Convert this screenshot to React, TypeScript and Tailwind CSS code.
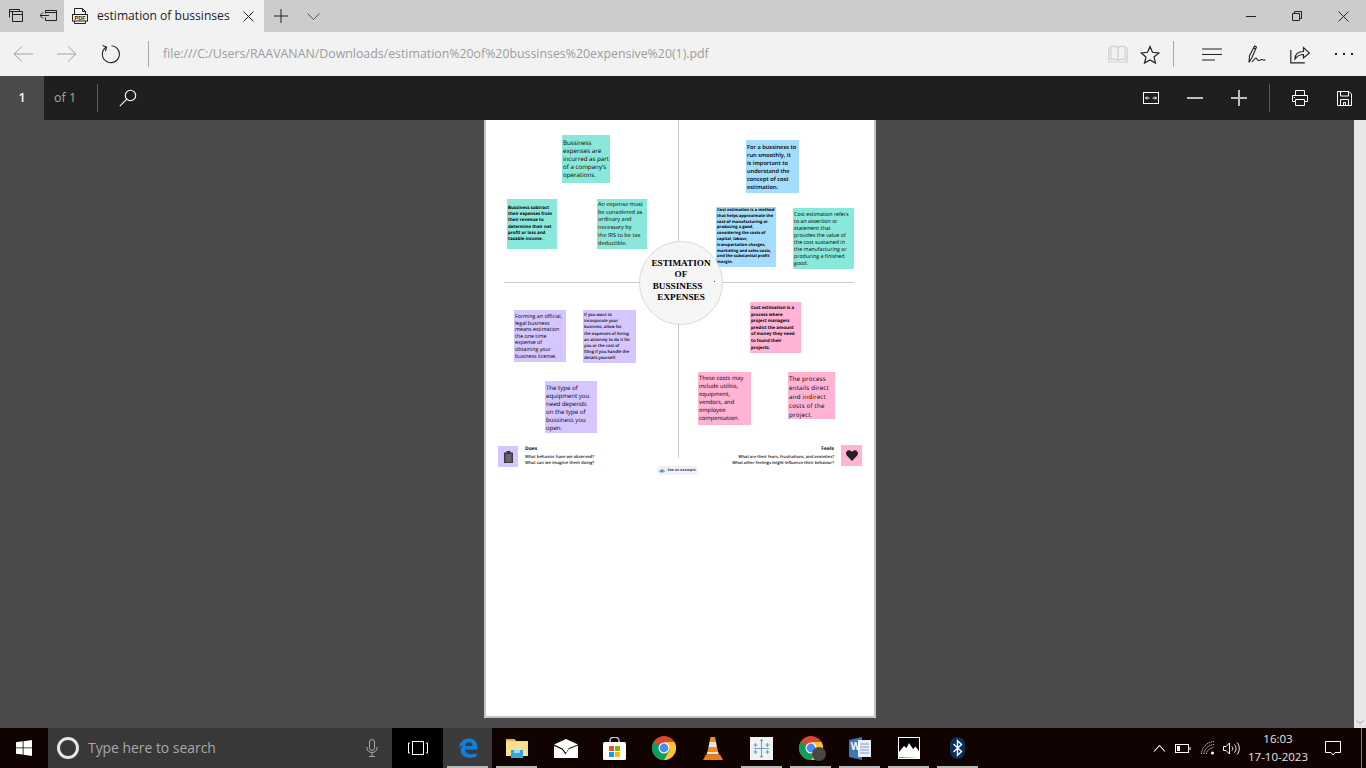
import type { ReactNode } from "react";

const sans = { fontFamily: '"Open Sans", "Noto Sans", sans-serif' };

type Note = {
  left: number;
  top: number;
  size: number;
  color: string;
  textClass: string;
  lines: string[];
};

// positions are relative to the pdf page, the sticky notes sit on a free canvas
const notes: Note[] = [
  { left: 78, top: 15, size: 48, color: "bg-[#8ae8da]", textClass: "text-[6.2px] leading-[8px] pt-[4px] pl-[1px]", lines: ["Bussiness", "expenses are", "incurred as part", "of a company's", "operations."] },
  { left: 23, top: 79, size: 50, color: "bg-[#8ae8da]", textClass: "text-[4.4px] leading-[6.2px] pt-[6px] pl-[1px] font-bold", lines: ["Bussiness subtract", "their expenses from", "their revenue to", "determine their net", "profit or loss and", "taxable income."] },
  { left: 113, top: 79, size: 50, color: "bg-[#8ae8da]", textClass: "text-[5.6px] leading-[7.7px] pt-[2px] pl-[1px]", lines: ["An expense must", "be considered as", "ordinary and", "necessary by", "the IRS to be tax", "deductible."] },
  { left: 262, top: 20, size: 53, color: "bg-[#a4dcfb]", textClass: "text-[5.7px] leading-[8px] pt-[3px] pl-[1px] font-semibold", lines: ["For a bussiness to", "run smoothly, it", "is important to", "understand the", "concept of cost", "estimation."] },
  { left: 232, top: 87, size: 60, color: "bg-[#a4dcfb]", textClass: "text-[4.1px] leading-[5.8px] pt-[1px] pl-[1px] font-bold", lines: ["Cost estimation is a method", "that helps approximate the", "cost of manufacturing or", "producing a good,", "considering the costs of", "capital, labour,", "transportation charges,", "marketing and sales costs,", "and the substantial profit", "margin."] },
  { left: 309, top: 88, size: 61, color: "bg-[#8ae8da]", textClass: "text-[5.3px] leading-[7px] pt-[3px] pl-[1px]", lines: ["Cost estimation refers", "to an assertion or", "statement that", "provides the value of", "the cost sustained in", "the manufacturing or", "producing a finished", "good."] },
  { left: 30, top: 190, size: 52, color: "bg-[#d6c6ff]", textClass: "text-[5.3px] leading-[6.6px] pt-[3px] pl-[1px]", lines: ["Forming an official,", "legal business", "means estimation", "the one time", "expense of", "obtaining your", "business license."] },
  { left: 99, top: 190, size: 53, color: "bg-[#d6c6ff]", textClass: "text-[4.2px] leading-[6.2px] pt-[3px] pl-[1px] font-semibold", lines: ["If you want to", "incorporate your", "business, allow for", "the expenses of hiring", "an attorney to do it for", "you or the cost of", "filing if you handle the", "details yourself."] },
  { left: 61, top: 261, size: 52, color: "bg-[#d6c6ff]", textClass: "text-[6.1px] leading-[8px] pt-[3px] pl-[1px]", lines: ["The type of", "equipment you", "need depends", "on the type of", "bussiness you", "open."] },
  { left: 266, top: 182, size: 51, color: "bg-[#ffb3d5]", textClass: "text-[4.4px] leading-[6.6px] pt-[3px] pl-[1px] font-bold", lines: ["Cost estimation is a", "process where", "project managers", "predict the amount", "of money they need", "to found their", "projects."] },
  { left: 214, top: 252, size: 53, color: "bg-[#ffb3d5]", textClass: "text-[5.8px] leading-[8px] pt-[2px] pl-[1px]", lines: ["These costs may", "include utilitis,", "equipment,", "vendors, and", "employee", "compensation."] },
  { left: 304, top: 252, size: 47, color: "bg-[#ffb3d5]", textClass: "text-[6.2px] leading-[9px] pt-[2px] pl-[1px] tracking-[0.2px]", lines: ["The process", "entails direct", "and indirect", "costs of the", "project."] },
];

function TabsIcon() {
  return (
    <svg width="16" height="16" viewBox="0 0 16 16" fill="none" stroke="#222">
      <path d="M1.5 9.5v-8h10v2M1.5 3.5h10" />
      <path d="M4.5 13.5v-10h10v10zM4.5 6.5h10" />
    </svg>
  );
}

function BackTabsIcon() {
  return (
    <svg width="17" height="12" viewBox="0 0 17 12" fill="none" stroke="#222">
      <path d="M5.5.5h11v10h-11v-3M5.500 3.5v-3M5.500 2.5h11" />
      <path d="M0 5.5h9M3 2.500l-3 3 3 3" />
    </svg>
  );
}

function PdfIcon() {
  return (
    <svg width="16" height="16" viewBox="0 0 16 16" fill="none" stroke="#222">
      <path d="M2.5 6V.5h8l3 3V6M2.5 13v2.5h11V13M10.5.5v3h3" />
      <rect x="0.5" y="6.5" width="15" height="6.5" />
      <text x="8" y="11.7" textAnchor="middle" fontSize="5.5" fontWeight="700" fill="#222" stroke="none" fontFamily="Liberation Sans">PDF</text>
    </svg>
  );
}

function CloseIcon({ size }: { size: number }) {
  return (
    <svg width={size} height={size} viewBox={`0 0 ${size} ${size}`} fill="none" stroke="#222">
      <path d={`M.5.5L${size - 0.5} ${size - 0.5}M${size - 0.5} .5L.5 ${size - 0.5}`} />
    </svg>
  );
}

function ArrowIcon({ back }: { back?: boolean }) {
  return (
    <svg width="20" height="16" viewBox="0 0 20 16" fill="none" stroke="#a3a3a3">
      <path d={back ? "M1 8h19M9 .5L1 8l8 7.5" : "M0 8h19M11 .5L19 8l-8 7.5"} />
    </svg>
  );
}

function RefreshIcon() {
  return (
    <svg width="20" height="20" viewBox="0 0 20 20" fill="none" stroke="#222" strokeWidth="1.1">
      <path d="M6 3.2A8.5 8.5 0 1 0 11.5 1.7" />
      <path d="M2.5 1.5L6.6 3 5.5 7" />
    </svg>
  );
}

function ReadingIcon() {
  return (
    <svg width="20" height="18" viewBox="0 0 20 18" fill="none" stroke="#cfcfcf" strokeWidth="1.2">
      <path d="M10 2.5C8 1 5 1 3 1.500v13c2-.5 5-.5 7 1 2-1.500 5-1.500 7-1v-13C15 1 12 1 10 2.500zM10 2.500v13" />
      <path d="M3 3H.8v14h18.4V3H17" />
    </svg>
  );
}

function StarIcon() {
  return (
    <svg width="20" height="19" viewBox="0 0 20 19" fill="none" stroke="#222" strokeWidth="1.2">
      <path d="M10 1.5l2.5 5.800 6.300.6-4.800 4.100 1.500 6.100L10 15l-5.500 3.100L6 12 1.200 7.900l6.300-.6z" />
    </svg>
  );
}

function HubIcon() {
  return (
    <svg width="20" height="13" viewBox="0 0 20 13" fill="none" stroke="#222">
      <path d="M0 1h20M0 6.500h20M0 12h13" />
    </svg>
  );
}

function PenIcon() {
  return (
    <svg width="18" height="19" viewBox="0 0 18 19" fill="none" stroke="#222" strokeWidth="1.1">
      <path d="M1 17.500L1.500 11 6.500 1l2 1-4.500 10.500zM5.500 3l2 1" />
      <path d="M4 17c1.500-1.500 3-4 4-4s1 2.500 2.500 2.500 2-1 3-1 2 1 4 .5" />
    </svg>
  );
}

function ShareIcon() {
  return (
    <svg width="20" height="19" viewBox="0 0 20 19" fill="none" stroke="#222" strokeWidth="1.2">
      <path d="M.8 5v12.800h14" />
      <path d="M5 14c0-5 3-7.500 8.500-7.500V2.500L19.500 8l-6 5V9.500C9.500 9.500 7 11 5 14z" />
    </svg>
  );
}

function SearchGlass() {
  return (
    <svg width="18" height="18" viewBox="0 0 18 18" fill="none" stroke="#fff" strokeWidth="1.1">
      <circle cx="11.5" cy="6.5" r="5.2" />
      <path d="M7.800 10.200L.8 17.200" />
    </svg>
  );
}

function FitIcon() {
  return (
    <svg width="16" height="12" viewBox="0 0 16 12" fill="none" stroke="#fff">
      <rect x="0.5" y="0.5" width="15" height="11" />
      <path d="M2.500 6h4M2.500 6L4 4.500M2.500 6L4 7.500M13.500 6h-4M13.500 6L12 4.500M13.500 6L12 7.500" />
    </svg>
  );
}

function ZoomOutIcon() {
  return (
    <svg width="16" height="2" viewBox="0 0 16 2" fill="#bdbdbd">
      <rect width="16" height="2" />
    </svg>
  );
}

function ZoomInIcon() {
  return (
    <svg width="16" height="16" viewBox="0 0 16 16" fill="#bdbdbd">
      <path d="M0 7h7V0h2v7h7v2H9v7H7V9H0z" />
    </svg>
  );
}

function PrintIcon() {
  return (
    <svg width="16" height="16" viewBox="0 0 16 16" fill="none" stroke="#fff">
      <path d="M3.500 5.500v-5h9v5M3.500 11.500h-3v-6h15v6h-3" />
      <path d="M3.500 9.500h9v6h-9zM2 7.500h1" />
    </svg>
  );
}

function SaveIcon() {
  return (
    <svg width="15" height="15" viewBox="0 0 15 15" fill="none" stroke="#fff">
      <path d="M.5.5h11.500l2.500 2.500v11.500H.5zM3.500.5v4.500h8V.5M3.500 14.500V8.500h8v6M6.500 14.500v-3h2v3" />
    </svg>
  );
}

function WindowsLogo() {
  return (
    <svg width="16" height="16" viewBox="0 0 16 16" fill="#fff">
      <path d="M0 2.300L6.700 1.300v6.200H0zM7.500 1.200L16 0v7.500H7.500zM0 8.300h6.700v6.300L0 13.700zM7.500 8.300H16V16l-8.500-1.200z" />
    </svg>
  );
}

function EdgeLogo() {
  return (
    <svg width="20" height="20" viewBox="0 0 20 20" fill="#0f7fdc">
      <path d="M1 9C2 4 6 .5 11 .5c5.500 0 8.500 4 8.500 9.500v1.500H7c.3 3.200 3 4.800 6 4.800 2.200 0 4.200-.6 5.500-1.400v3.700c-1.600.9-3.800 1.400-6 1.400C7 20 2.500 17 2.500 12.500c0-2 1-4 3-5.300C4 7.500 2.500 8 1 9zM7 8h7.500c0-2.200-1.300-3.800-3.500-3.800-2.200 0-3.700 1.700-4 3.800z" />
    </svg>
  );
}

function FolderLogo() {
  return (
    <svg width="22" height="20" viewBox="0 0 22 20">
      <path d="M0 1h8l2 2h12v15H0z" fill="#f7d774" />
      <path d="M0 1h8l2 2H0z" fill="#e8b93f" />
      <path d="M0 4h22v14H0z" fill="#fbe08f" />
      <path d="M5 12h12v8H5z" fill="#2fa8e0" />
      <path d="M8 12h6v3H8z" fill="#9edcf5" />
    </svg>
  );
}

function MailLogo() {
  return (
    <svg width="24" height="19" viewBox="0 0 24 19" fill="#fff">
      <path d="M0 5.500L12 0l12 5.500L15 9l-3 5-3.500-4.500zM0 7l8 3.500 3.500 5L15 10l9-3.500V19H0z" />
    </svg>
  );
}

function StoreLogo() {
  return (
    <svg width="23" height="23" viewBox="0 0 23 23">
      <path d="M7 7V3.500a4.500 3.500 0 0 1 9 0V7" fill="none" stroke="#ddd" strokeWidth="1.3" />
      <rect x="0" y="5" width="23" height="18" rx="1.5" fill="#fff" />
      <rect x="6" y="9" width="5" height="5" fill="#f25022" />
      <rect x="12" y="9" width="5" height="5" fill="#7fba00" />
      <rect x="6" y="15" width="5" height="5" fill="#00a4ef" />
      <rect x="12" y="15" width="5" height="5" fill="#ffb900" />
    </svg>
  );
}

function ChromeLogo() {
  return (
    <svg width="24" height="24" viewBox="0 0 24 24">
      <circle cx="12" cy="12" r="12" fill="#db4437" />
      <path d="M12 12L1.600 6A12 12 0 0 0 12 24l6-10.400z" fill="#0f9d58" />
      <path d="M12 6h10.400A12 12 0 0 1 12 24l6-10.400z" fill="#fdc52b" />
      <circle cx="12" cy="12" r="5.5" fill="#fff" />
      <circle cx="12" cy="12" r="4.4" fill="#4a8af4" />
    </svg>
  );
}

function VlcLogo() {
  return (
    <svg width="20" height="23" viewBox="0 0 20 23">
      <path d="M7.500 0h4.500l1 5H6.500z" fill="#f58a1f" />
      <path d="M6.500 5h6.500l1 5H5.500z" fill="#e8e4dc" />
      <path d="M5.500 10h8.500l1 4.500H4.500z" fill="#f58a1f" />
      <path d="M4.500 14.500H15l1 3H3.500z" fill="#e8e4dc" />
      <path d="M3 17.500h14l3 5.500H0z" fill="#ef7c12" />
    </svg>
  );
}

function TableauLogo() {
  return (
    <svg width="23" height="23" viewBox="0 0 23 23" stroke="#6d9fc2" strokeWidth="1.1">
      <rect width="23" height="23" fill="#f1f3f3" stroke="none" />
      <path d="M11.500 3v17M4 11.500h15M5.500 6v4M3.500 8h4M17.500 6v4M15.500 8h4M5.500 13v4M3.500 15h4M17.500 13v4M15.500 15h4M11.500 2v3M10 3.500h3M11.500 18v3M10 19.500h3" fill="none" />
    </svg>
  );
}

function WordLogo() {
  return (
    <svg width="23" height="23" viewBox="0 0 23 23">
      <path d="M1 3l13-3v23L1 20z" fill="#3f74b8" />
      <rect x="10" y="3" width="13" height="17" fill="#e8eef7" />
      <path d="M12 7h9M12 10h9M12 13h9M12 16h9" stroke="#7ba0cf" />
      <text x="7.5" y="13" fontSize="10" fontWeight="700" fill="#fff" textAnchor="middle" fontFamily="Liberation Sans">W</text>
    </svg>
  );
}

function PhotosLogo() {
  return (
    <svg width="22" height="22" viewBox="0 0 22 22">
      <rect x="0.5" y="0.5" width="21" height="21" fill="#000" stroke="#fff" />
      <path d="M1 20.500V15l5-6 2.500 2L11 6l4 6 2.500-2.500L21 14v7z" fill="#fff" />
    </svg>
  );
}

function BluetoothLogo() {
  return (
    <svg width="15" height="22" viewBox="0 0 15 22">
      <rect width="15" height="22" rx="7.5" fill="#0a2e5c" />
      <path d="M3.500 7l8 7.500-4 3.800V3.700l4 3.800-8 7.500" fill="none" stroke="#fff" strokeWidth="1.4" />
    </svg>
  );
}

function MicIcon() {
  return (
    <svg width="12" height="18" viewBox="0 0 12 18" fill="none" stroke="#a8a8a8">
      <rect x="3.500" y="0.500" width="5" height="11" rx="2.500" />
      <path d="M1 8v1.500a5 4 0 0 0 10 0V8M6 13.500v4M3 17.500h6" />
    </svg>
  );
}

function TaskViewIcon() {
  return (
    <svg width="20" height="14" viewBox="0 0 20 14" fill="none" stroke="#fff">
      <rect x="4.5" y="0.5" width="11" height="13" />
      <path d="M2 2H.5v10H2M18 2h1.500v10H18" />
    </svg>
  );
}

function TrayChevron() {
  return (
    <svg width="17" height="8" viewBox="0 0 17 8" fill="none" stroke="#fff" strokeWidth="1.1">
      <path d="M3 7.500l5.500-6 5.500 6" />
    </svg>
  );
}

function BatteryIcon() {
  return (
    <svg width="16" height="9" viewBox="0 0 16 9" fill="none" stroke="#fff">
      <rect x="0.5" y="0.5" width="13" height="8" />
      <rect x="2" y="2" width="3" height="5" fill="#fff" stroke="none" />
      <path d="M15 3v3" />
    </svg>
  );
}

function WifiIcon() {
  return (
    <svg width="14" height="14" viewBox="0 0 14 14" fill="none" stroke="#bbb">
      <path d="M.5 13C.5 6.500 6 1 13 .5M3 13c0-5 4.500-9 10-9.500M5.500 13c0-3.500 3.500-6 7-6.500" strokeDasharray="1.500 .8" />
      <circle cx="11.5" cy="12" r="1.5" fill="#fff" stroke="none" />
    </svg>
  );
}

function SpeakerIcon() {
  return (
    <svg width="17" height="13" viewBox="0 0 17 13" fill="none" stroke="#fff">
      <path d="M.5 4.500h2.500L6.500 1v11L3 8.500H.5z" />
      <path d="M9 4.500c1 1 1 3 0 4M11.500 2.500c2 2 2 6 0 8M14 .5c3 3 3 9 0 12" />
    </svg>
  );
}

function NotificationIcon() {
  return (
    <svg width="16" height="15" viewBox="0 0 16 15" fill="none" stroke="#fff">
      <path d="M.5.5h15v11H10l-2 2.500-2-2.500H.5z" />
    </svg>
  );
}

function ClipboardIcon() {
  return (
    <svg width="9" height="12" viewBox="0 0 9 12" fill="#3a3a3a">
      <path d="M0 1.500h2.500V0h4v1.500H9V12H0z" />
      <path d="M1.500 4h6M1.500 6h6M1.500 8h6M1.500 10h6" stroke="#d6c6ff" strokeWidth="0.6" />
    </svg>
  );
}

function HeartIcon() {
  return (
    <svg width="12" height="11" viewBox="0 0 12 11" fill="#222">
      <path d="M6 11L.8 5.600C-.8 3.500.4.300 3 .3c1.300 0 2.400.7 3 1.900.6-1.200 1.700-1.900 3-1.900 2.600 0 3.800 3.200 2.200 5.300z" />
    </svg>
  );
}

function EyeIcon() {
  return (
    <svg width="6" height="4" viewBox="0 0 6 4" fill="none" stroke="#2273a8" strokeWidth="0.7">
      <path d="M.3 2C1.500.5 4.500.5 5.700 2 4.500 3.500 1.500 3.500.3 2z" />
      <circle cx="3" cy="2" r="0.7" fill="#2273a8" />
    </svg>
  );
}

function TaskbarApp({ children, active, lit }: { children: ReactNode; active?: boolean; lit?: boolean }) {
  return (
    <div className={`relative flex h-full w-[49px] items-center justify-center ${lit ? "bg-[#3b3b3b]" : ""}`}>
      {children}
      {active && <div className="absolute right-[4px] bottom-0 left-[4px] h-[2px] bg-[#b8b8b8]" />}
    </div>
  );
}

function PdfPage() {
  return (
    <div className="relative h-[598px] w-[392px] shrink-0 overflow-hidden border-x-2 border-b-2 border-[#c4c4c4] bg-white [text-rendering:geometricPrecision]">
      <div className="absolute top-0 left-[192px] h-[338px] w-px bg-[#c8c8c8]" />
      <div className="absolute top-[162px] left-[18px] h-px w-[350px] bg-[#c8c8c8]" />

      {notes.map((note) => (
        <div
          key={note.left + "-" + note.top}
          className={`absolute overflow-hidden whitespace-nowrap text-black ${note.color} ${note.textClass}`}
          style={{ left: note.left - 2, top: note.top, width: note.size, height: note.size }}
        >
          {note.lines.map((line) => (
            <div key={line}>{line}</div>
          ))}
        </div>
      ))}

      <div className="absolute top-[121px] left-[153px] flex h-[84px] w-[84px] flex-col items-center justify-center rounded-full border border-[#d9d9d9] bg-[#f6f6f6] pb-[5px] font-['Liberation_Serif',serif] text-[9.2px] leading-[11.5px] font-bold whitespace-nowrap text-black">
        <div>ESTIMATION</div>
        <div>OF</div>
        <div className="pr-[7px]">BUSSINESS</div>
        <div>EXPENSES</div>
        <div className="absolute top-[39px] left-[74px] h-px w-px bg-[#444]" />
      </div>

      <div className="absolute top-[326px] left-[12px] flex h-[21px] w-[20px] items-center justify-center bg-[#d6c6ff]">
        <ClipboardIcon />
      </div>
      <div className="absolute top-[326px] left-[39px] whitespace-nowrap text-[#111]">
        <div className="text-[5px] leading-[7px] font-bold">Does</div>
        <div className="mt-[2px] text-[4.2px] leading-[5.5px] font-semibold">What behavior have we observed?</div>
        <div className="text-[4.2px] leading-[5.5px] font-semibold">What can we imagine them doing?</div>
      </div>

      <div className="absolute top-[325px] left-[355px] flex h-[21px] w-[21px] items-center justify-center bg-[#ffb3d5]">
        <HeartIcon />
      </div>
      <div className="absolute top-[326px] right-[40px] whitespace-nowrap text-right text-[#111]">
        <div className="text-[5px] leading-[7px] font-bold">Feels</div>
        <div className="mt-[2px] text-[4.1px] leading-[5.5px] font-semibold">What are their fears, frustrations, and anxieties?</div>
        <div className="text-[4.1px] leading-[5.5px] font-semibold">What other feelings might influence their behavior?</div>
      </div>

      <div className="absolute top-[346px] left-[171px] flex h-[9px] w-[41px] items-center justify-center gap-[2px] rounded-[4px] bg-[#f2f2f2] text-[3.6px] font-bold whitespace-nowrap text-[#134f82]">
        <EyeIcon />
        <span>See an example</span>
      </div>
    </div>
  );
}

export default function App() {
  return (
    <div className="flex h-[768px] w-[1366px] flex-col overflow-hidden bg-[#4a4a4a]" style={sans}>
      {/* tab strip */}
      <div className="flex h-[32px] shrink-0 items-center bg-[#cccccc] text-[#222]">
        <div className="flex w-[32px] justify-center"><TabsIcon /></div>
        <div className="flex w-[32px] justify-center"><BackTabsIcon /></div>
        <div className="flex h-full w-[200px] items-center bg-[#f2f2f2] pl-[8px]">
          <PdfIcon />
          <span className="ml-[9px] text-[12.1px]">estimation of bussinses</span>
          <div className="ml-[13px]"><CloseIcon size={11} /></div>
        </div>
        <div className="flex w-[34px] justify-center">
          <svg width="14" height="14" viewBox="0 0 14 14" fill="none" stroke="#222"><path d="M7 0v14M0 7h14" /></svg>
        </div>
        <div className="flex w-[30px] justify-center">
          <svg width="13" height="7" viewBox="0 0 13 7" fill="none" stroke="#555"><path d="M.5.5l6 6 6-6" /></svg>
        </div>
        <div className="flex-1" />
        <div className="flex w-[46px] justify-center">
          <svg width="10" height="1" viewBox="0 0 10 1" fill="#222"><rect width="10" height="1" /></svg>
        </div>
        <div className="flex w-[46px] justify-center">
          <svg width="10" height="10" viewBox="0 0 10 10" fill="none" stroke="#222"><path d="M.5 2.500h7v7h-7zM2.500 2.500v-2h7v7h-2" /></svg>
        </div>
        <div className="flex w-[46px] justify-center"><CloseIcon size={11} /></div>
      </div>

      {/* address bar */}
      <div className="flex h-[44px] shrink-0 items-center bg-[#f2f2f2]">
        <div className="ml-[13px]"><ArrowIcon back /></div>
        <div className="ml-[24px]"><ArrowIcon /></div>
        <div className="ml-[23px]"><RefreshIcon /></div>
        <div className="ml-[28px] h-[26px] w-px bg-[#a8a8a8]" />
        <span className="ml-[14px] text-[12.35px] text-[#9c9c9c]">file:///C:/Users/RAAVANAN/Downloads/estimation%20of%20bussinses%20expensive%20(1).pdf</span>
        <div className="flex-1" />
        <ReadingIcon />
        <div className="ml-[12px]"><StarIcon /></div>
        <div className="ml-[13px] h-[26px] w-px bg-[#a8a8a8]" />
        <div className="ml-[28px]"><HubIcon /></div>
        <div className="ml-[26px]"><PenIcon /></div>
        <div className="ml-[24px]"><ShareIcon /></div>
        <div className="mr-[13px] ml-[25px] flex gap-[6px]">
          <div className="h-[2px] w-[2px] bg-[#222]" />
          <div className="h-[2px] w-[2px] bg-[#222]" />
          <div className="h-[2px] w-[2px] bg-[#222]" />
        </div>
      </div>

      {/* pdf toolbar */}
      <div className="flex h-[44px] shrink-0 items-center bg-[#1f1f1f] text-[12.5px]">
        <div className="flex h-full w-[44px] items-center justify-center bg-[#4a4a4a] font-semibold text-white">1</div>
        <span className="ml-[10px] text-[#a8a8a8]">of 1</span>
        <div className="ml-[21px] h-[28px] w-px bg-[#5c5c5c]" />
        <div className="ml-[21px]"><SearchGlass /></div>
        <div className="flex-1" />
        <FitIcon />
        <div className="ml-[28px]"><ZoomOutIcon /></div>
        <div className="ml-[28px]"><ZoomInIcon /></div>
        <div className="ml-[22px] h-[28px] w-px bg-[#5c5c5c]" />
        <div className="ml-[22px]"><PrintIcon /></div>
        <div className="mr-[14px] ml-[29px]"><SaveIcon /></div>
      </div>

      {/* document area */}
      <div className="flex h-[608px] shrink-0">
        <div className="flex flex-1 justify-center pl-[6px]">
          <PdfPage />
        </div>
        <div className="flex w-[12px] flex-col items-center justify-end bg-[#e8e8e8]">
          <svg width="8" height="4" viewBox="0 0 8 4" fill="none" stroke="#a0a0a0" className="mb-[4px]"><path d="M.5.5L4 3.500 7.500.5" /></svg>
        </div>
      </div>

      {/* taskbar */}
      <div className="flex h-[40px] shrink-0 items-center bg-[#120303] text-white">
        <div className="flex h-full w-[48px] items-center justify-center"><WindowsLogo /></div>
        <div className="flex h-full w-[344px] items-center bg-[#383838] pr-[14px] pl-[9px]">
          <div className="h-[22px] w-[22px] rounded-full border-[3px] border-[#e6e6e6]" />
          <span className="ml-[9px] text-[13.9px] text-[#a8a8a8]">Type here to search</span>
          <div className="flex-1" />
          <MicIcon />
        </div>
        <div className="flex h-full w-[51px] items-center justify-center bg-black"><TaskViewIcon /></div>
        <TaskbarApp lit active><EdgeLogo /></TaskbarApp>
        <TaskbarApp active><FolderLogo /></TaskbarApp>
        <TaskbarApp><MailLogo /></TaskbarApp>
        <TaskbarApp><StoreLogo /></TaskbarApp>
        <TaskbarApp><ChromeLogo /></TaskbarApp>
        <TaskbarApp><VlcLogo /></TaskbarApp>
        <TaskbarApp active><TableauLogo /></TaskbarApp>
        <TaskbarApp active>
          <div className="relative">
            <ChromeLogo />
            <div className="absolute -right-[3px] -bottom-[1px] h-[14px] w-[14px] rounded-full bg-[#4a4644]" />
          </div>
        </TaskbarApp>
        <TaskbarApp active><WordLogo /></TaskbarApp>
        <TaskbarApp active><PhotosLogo /></TaskbarApp>
        <TaskbarApp active><BluetoothLogo /></TaskbarApp>
        <div className="flex-1" />
        <TrayChevron />
        <div className="ml-[7px]"><BatteryIcon /></div>
        <div className="ml-[10px]"><WifiIcon /></div>
        <div className="ml-[8px]"><SpeakerIcon /></div>
        <div className="ml-[8px] flex w-[60px] flex-col items-center text-[11.5px] leading-[18px] whitespace-nowrap text-[#e6e6e6]">
          <span>16:03</span>
          <span>17-10-2023</span>
        </div>
        <div className="ml-[17px]"><NotificationIcon /></div>
        <div className="mr-[4px] ml-[20px] h-full w-px bg-[#8a8080]" />
      </div>
    </div>
  );
}
